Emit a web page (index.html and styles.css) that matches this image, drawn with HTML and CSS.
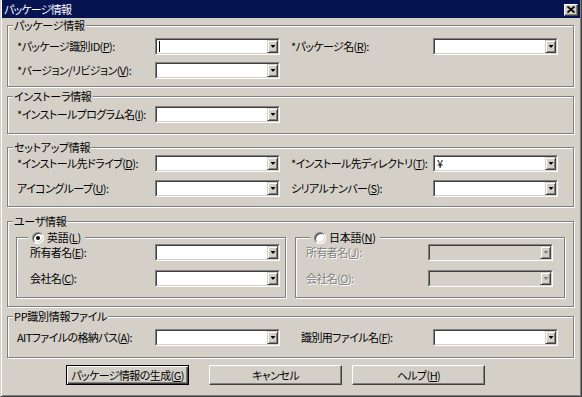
FILE: index.html
```html
<!DOCTYPE html>
<html lang="ja">

<head>
    <meta charset="UTF-8">
    <meta name="viewport" content="width=device-width, initial-scale=1.0">
    <title>パッケージ情報</title>
    <link rel="stylesheet" href="styles.css">
</head>

<body>
    <div class="window">
        <div class="titlebar">
            <span class="title">パッケージ情報</span>
            <span class="closebtn">
                <svg width="8" height="7" viewBox="0 0 8 7">
                    <path d="M0.5 0.5L7.5 6.5M7.5 0.5L0.5 6.5" stroke="#000" stroke-width="1.8" />
                </svg>
            </span>
        </div>

        <div class="client">
            <div class="group g1">
                <span class="caption">パッケージ情報</span>
                <div class="row">
                    <span class="lbl">*パッケージ識別ID(<u>P</u>):</span>
                    <div class="combo">
                        <div class="field"><span class="text"><i class="caret"></i></span><span class="drop"><i class="arrow"></i></span></div>
                    </div>
                    <span class="lbl rlbl">*パッケージ名(<u>R</u>):</span>
                    <div class="combo">
                        <div class="field"><span class="text"></span><span class="drop"><i class="arrow"></i></span></div>
                    </div>
                </div>
                <div class="row">
                    <span class="lbl">*バージョン/リビジョン(<u>V</u>):</span>
                    <div class="combo">
                        <div class="field"><span class="text"></span><span class="drop"><i class="arrow"></i></span></div>
                    </div>
                </div>
            </div>

            <div class="group g2">
                <span class="caption">インストーラ情報</span>
                <div class="row">
                    <span class="lbl">*インストールプログラム名(<u>I</u>):</span>
                    <div class="combo">
                        <div class="field"><span class="text"></span><span class="drop"><i class="arrow"></i></span></div>
                    </div>
                </div>
            </div>

            <div class="group g3">
                <span class="caption">セットアップ情報</span>
                <div class="row">
                    <span class="lbl">*インストール先ドライブ(<u>D</u>):</span>
                    <div class="combo">
                        <div class="field"><span class="text"></span><span class="drop"><i class="arrow"></i></span></div>
                    </div>
                    <span class="lbl rlbl">*インストール先ディレクトリ(<u>T</u>):</span>
                    <div class="combo">
                        <div class="field"><span class="text">¥</span><span class="drop"><i class="arrow"></i></span></div>
                    </div>
                </div>
                <div class="row">
                    <span class="lbl">アイコングループ(<u>U</u>):</span>
                    <div class="combo">
                        <div class="field"><span class="text"></span><span class="drop"><i class="arrow"></i></span></div>
                    </div>
                    <span class="lbl rlbl">シリアルナンバー(<u>S</u>):</span>
                    <div class="combo">
                        <div class="field"><span class="text"></span><span class="drop"><i class="arrow"></i></span></div>
                    </div>
                </div>
            </div>

            <div class="group g4">
                <span class="caption">ユーザ情報</span>
                <div class="sub sub-left">
                    <span class="caption radiocap"><i class="radio checked"></i><span>英語(<u>L</u>)</span></span>
                    <div class="row">
                        <span class="lbl">所有者名(<u>E</u>):</span>
                        <div class="combo">
                            <div class="field"><span class="text"></span><span class="drop"><i class="arrow"></i></span></div>
                        </div>
                    </div>
                    <div class="row">
                        <span class="lbl">会社名(<u>C</u>):</span>
                        <div class="combo">
                            <div class="field"><span class="text"></span><span class="drop"><i class="arrow"></i></span></div>
                        </div>
                    </div>
                </div>
                <div class="sub sub-right">
                    <span class="caption radiocap"><i class="radio"></i><span>日本語(<u>N</u>)</span></span>
                    <div class="row">
                        <span class="lbl off">所有者名(<u>J</u>):</span>
                        <div class="combo disabled">
                            <div class="field"><span class="text"></span><span class="drop"><i class="arrow"></i></span></div>
                        </div>
                    </div>
                    <div class="row">
                        <span class="lbl off">会社名(<u>O</u>):</span>
                        <div class="combo disabled">
                            <div class="field"><span class="text"></span><span class="drop"><i class="arrow"></i></span></div>
                        </div>
                    </div>
                </div>
            </div>

            <div class="group g5">
                <span class="caption">PP識別情報ファイル</span>
                <div class="row">
                    <span class="lbl">AITファイルの格納パス(<u>A</u>):</span>
                    <div class="combo">
                        <div class="field"><span class="text"></span><span class="drop"><i class="arrow"></i></span></div>
                    </div>
                    <span class="lbl rlbl2">識別用ファイル名(<u>F</u>):</span>
                    <div class="combo">
                        <div class="field"><span class="text"></span><span class="drop"><i class="arrow"></i></span></div>
                    </div>
                </div>
            </div>

            <div class="buttons">
                <button class="btn default">パッケージ情報の生成(<u>G</u>)</button>
                <button class="btn cancel">キャンセル</button>
                <button class="btn help">ヘルプ(<u>H</u>)</button>
            </div>
        </div>
    </div>
</body>

</html>
```

FILE: styles.css
```css
* {
    box-sizing: border-box;
}

body {
    margin: 0;
    background-color: #d4d0c8;
    font-family: "Noto Sans CJK JP", "Noto Sans", sans-serif;
    font-size: 11px;
    line-height: 15px;
    letter-spacing: -0.5px;
    color: #000;
    font-feature-settings: "palt";
}

u {
    text-decoration-thickness: 1px;
    text-underline-offset: 1px;
}

.window {
    width: 582px;
    height: 397px;
    background-color: #d4d0c8;
    border-left: 1px solid #d4d0c8;
    border-right: 1px solid #404040;
    border-bottom: 1px solid #404040;
    box-shadow: inset 1px 0 0 #fff, inset -1px -1px 0 #808080;
    padding: 0 1px 1px 1px;
}

/* title bar */
.titlebar {
    height: 18px;
    background-color: #061452;
    color: #fff;
    display: flex;
    align-items: center;
    justify-content: space-between;
    padding: 0 2px 0 2px;
}

.title {
    line-height: 16px;
    letter-spacing: -0.8px;
}

.closebtn {
    width: 14px;
    height: 12px;
    background-color: #d4d0c8;
    border: 1px solid;
    border-color: #fff #404040 #404040 #fff;
    box-shadow: inset -1px -1px 0 #808080;
    display: flex;
    align-items: center;
    justify-content: center;
    margin-top: 1px;
}

.closebtn svg {
    display: block;
}

/* group boxes */
.group {
    position: relative;
    border: 1px solid #808080;
    box-shadow: 1px 1px 0 #fff, inset 1px 1px 0 #fff;
    margin: 0 6px 0 5px;
    padding-left: 9px;
    display: flex;
    flex-direction: column;
}

.caption {
    position: absolute;
    top: -8px;
    left: 5px;
    padding: 0 1px;
    line-height: 15px;
    letter-spacing: -0.3px;
    background-color: #d4d0c8;
    white-space: nowrap;
}

.g1 {
    margin-top: 7px;
    padding-top: 12px;
    padding-bottom: 7px;
    gap: 7px;
}

.g2 {
    margin-top: 9px;
    padding-top: 9px;
    padding-bottom: 10px;
}

.g3 {
    margin-top: 13px;
    padding-top: 7px;
    padding-bottom: 9px;
    gap: 8px;
}

.g4 {
    margin-top: 14px;
    padding: 15px 0 8px 8px;
    flex-direction: row;
    gap: 9px;
}

.g5 {
    margin-top: 9px;
    padding-top: 12px;
    padding-bottom: 11px;
}

.sub {
    position: relative;
    width: 270px;
    border: 1px solid #808080;
    box-shadow: 1px 1px 0 #fff, inset 1px 1px 0 #fff;
    padding: 6px 0 10px 13px;
    display: flex;
    flex-direction: column;
    gap: 9px;
}

.sub-right {
    padding-left: 10px;
}

.radiocap {
    left: 11px;
    padding: 0 4px;
    display: flex;
    align-items: center;
    gap: 3px;
}

.sub-right .radiocap {
    left: 14px;
}

.radio {
    display: block;
    width: 12px;
    height: 12px;
    border-radius: 50%;
    border: 1px solid;
    border-color: #808080 #fff #fff #808080;
    box-shadow: inset 1px 1px 0 #404040, inset -1px -1px 0 #d4d0c8;
    background-color: #fff;
    position: relative;
}

.radio.checked::after {
    content: "";
    position: absolute;
    width: 4px;
    height: 4px;
    left: 3px;
    top: 3px;
    border-radius: 50%;
    background-color: #000;
}

/* rows */
.row {
    display: grid;
    grid-template-columns: 138px 125px 153px 125px;
    align-items: center;
    height: 17px;
}

.sub-left .row {
    grid-template-columns: 125px 125px;
}

.sub-right .row {
    grid-template-columns: 122px 125px;
}

.lbl {
    white-space: nowrap;
    margin-top: -1px;
    letter-spacing: -0.6px;
}

.rlbl {
    padding-left: 11px;
}

.rlbl2 {
    padding-left: 21px;
}

.lbl.off {
    color: #808080;
    text-shadow: 1px 1px 0 #fff;
}

/* combo boxes */
.combo {
    height: 17px;
    border: 1px solid;
    border-color: #808080 #fff #fff #808080;
}

.field {
    height: 15px;
    border: 1px solid;
    border-color: #404040 #d4d0c8 #d4d0c8 #404040;
    background-color: #fff;
    display: flex;
}

.text {
    flex: 1;
    display: flex;
    align-items: center;
    padding-left: 2px;
    line-height: 13px;
}

.caret {
    display: block;
    width: 1px;
    height: 11px;
    background-color: #000;
}

.drop {
    width: 11px;
    height: 13px;
    background-color: #d4d0c8;
    border: 1px solid;
    border-color: #d4d0c8 #404040 #404040 #d4d0c8;
    box-shadow: inset 1px 1px 0 #fff, inset -1px -1px 0 #808080;
    display: flex;
    align-items: center;
    justify-content: center;
}

.arrow {
    display: block;
    width: 5px;
    height: 3px;
    background-color: #000;
    clip-path: polygon(0 0, 100% 0, 50% 100%);
    margin-left: 1px;
}

.combo.disabled .field {
    background-color: #d4d0c8;
}

.combo.disabled .arrow {
    background-color: #808080;
}

/* buttons */
.buttons {
    display: flex;
    margin-top: 7px;
    padding-left: 64px;
}

.btn {
    height: 20px;
    padding: 0;
    white-space: nowrap;
    font-family: inherit;
    font-size: 11px;
    line-height: 15px;
    letter-spacing: -0.6px;
    font-feature-settings: "palt";
    color: #000;
    background-color: #d4d0c8;
    border: 1px solid;
    border-color: #fff #404040 #404040 #fff;
    box-shadow: inset -1px -1px 0 #808080;
    border-radius: 0;
}

.btn.default {
    width: 123px;
    margin-right: 20px;
    border-color: #000;
    box-shadow: inset 1px 1px 0 #fff, inset -1px -1px 0 #404040, inset -2px -2px 0 #808080;
}

.btn.cancel {
    width: 133px;
    margin-right: 10px;
}

.btn.help {
    width: 133px;
}
```
